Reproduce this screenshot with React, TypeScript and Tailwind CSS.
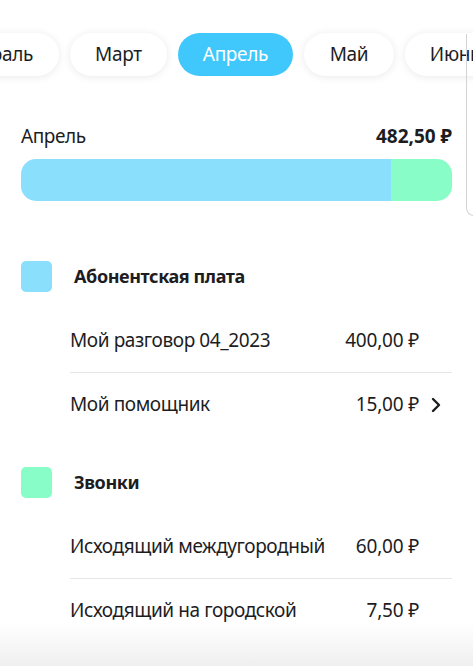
import React from "react";

const months: { name: string; w: string }[] = [
  { name: "Февраль", w: "w-[130px]" },
  { name: "Март", w: "w-[97px]" },
  { name: "Апрель", w: "w-[115px]" },
  { name: "Май", w: "w-[90px]" },
  { name: "Июнь", w: "w-[100px]" },
];

function Row({ label, amount, chevron, divider }: { label: string; amount: string; chevron?: boolean; divider?: boolean }) {
  return (
    <div className={`flex h-[64px] items-center justify-between ${divider ? "border-b border-[#e6e6e9]" : ""}`}>
      <span className="whitespace-nowrap text-[19px] tracking-[-0.4px] text-[#1d1d1f]">{label}</span>
      <div className="flex w-[120px] items-center justify-end">
        <span className="whitespace-nowrap text-[19px] tracking-[-0.2px] text-[#1d1d1f]">{amount}</span>
        <span className="flex w-[33px] justify-end pr-[11px]">
          {chevron && (
            <svg width="10" height="16" viewBox="0 0 10 16" fill="none">
              <path d="M2 2l6 6-6 6" stroke="#1d1d1f" strokeWidth="2.4" strokeLinecap="round" strokeLinejoin="round" />
            </svg>
          )}
        </span>
      </div>
    </div>
  );
}

function Category({ color, title, children }: { color: string; title: string; children: React.ReactNode }) {
  return (
    <div>
      <div className="flex items-center gap-[22px]">
        <div className={`h-[31px] w-[31px] rounded-[5px] ${color}`} />
        <span className="text-[18px] font-bold tracking-[-0.4px] text-[#1d1d1f]">{title}</span>
      </div>
      <div className="ml-[49px] mt-[17px]">{children}</div>
    </div>
  );
}

export default function App() {
  return (
    <div className="relative h-[666px] w-[473px] overflow-hidden bg-white" style={{ fontFamily: '"Noto Sans", "Open Sans", sans-serif' }}>
      <div className="absolute left-[466px] top-[34px] h-[182px] w-[30px] rounded-bl-[8px] border-b border-l border-[#d4d4d6]" />
      <div className="-ml-[71px] flex gap-[11px] pt-[33px]">
        {months.map((m) => (
          <div
            key={m.name}
            className={`flex h-[43px] shrink-0 items-center justify-center rounded-full text-[19px] tracking-[-0.3px] ${m.w} ${
              m.name === "Апрель" ? "bg-[#40c8fc] text-white" : "bg-white text-[#1d1d1f] shadow-[0_1px_8px_rgba(0,0,0,0.09)]"
            }`}
          >
            {m.name}
          </div>
        ))}
      </div>

      <div className="px-[21px]">
        <div className="mt-[46px] flex items-center justify-between">
          <span className="text-[19px] tracking-[-0.4px] text-[#1d1d1f]">Апрель</span>
          <span className="text-[19px] font-bold text-[#1d1d1f]">482,50 ₽</span>
        </div>
        <div className="mt-[8px] flex h-[42px] overflow-hidden rounded-[15px]">
          <div className="h-full w-[370px] bg-[#8adffc]" />
          <div className="h-full flex-1 bg-[#88fdc8]" />
        </div>

        <div className="mt-[60px]">
          <Category color="bg-[#8adffc]" title="Абонентская плата">
            <Row label="Мой разговор 04_2023" amount="400,00 ₽" divider />
            <Row label="Мой помощник" amount="15,00 ₽" chevron />
          </Category>
        </div>
        <div className="mt-[30px]">
          <Category color="bg-[#88fdc8]" title="Звонки">
            <Row label="Исходящий междугородный" amount="60,00 ₽" divider />
            <Row label="Исходящий на городской" amount="7,50 ₽" />
          </Category>
        </div>
      </div>

      <div className="pointer-events-none absolute bottom-0 left-0 h-[44px] w-full bg-gradient-to-b from-white/0 to-[#efefef]" />
    </div>
  );
}
